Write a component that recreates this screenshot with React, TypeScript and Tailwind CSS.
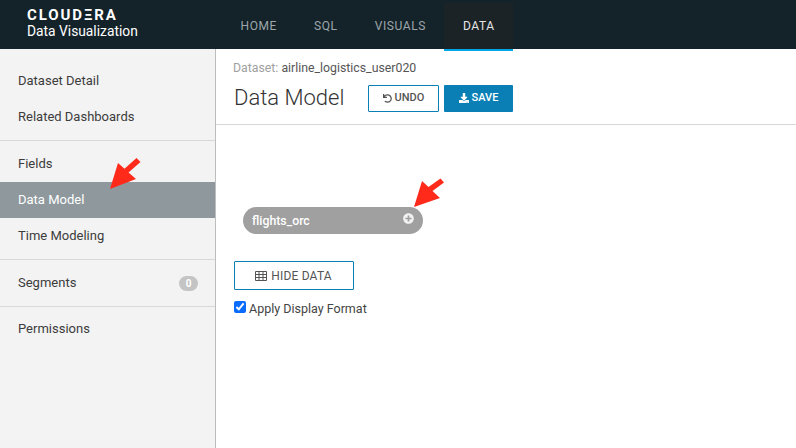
import React from "react";
import { FaDownload, FaPlusCircle, FaUndo } from "react-icons/fa";

const navItems = ["HOME", "SQL", "VISUALS", "DATA"];

const RedArrow: React.FC<{ className: string; d: string }> = ({ className, d }) => (
  <svg className={className} viewBox="0 0 32 36" width="32" height="36">
    <path d={d} fill="#ff2a1a" />
  </svg>
);

const SideItem: React.FC<{ label: string; active?: boolean; badge?: string }> = ({
  label,
  active,
  badge,
}) => (
  <div
    className={`h-9 pl-[18px] pr-[17px] flex items-center justify-between text-[13px] ${
      active ? "bg-[#8e989d] text-white" : "text-[#3c3c3c]"
    }`}
  >
    <span>{label}</span>
    {badge && (
      <span className="w-[19px] h-[15px] rounded-full bg-[#c4c4c4] text-white text-[10px] font-bold flex items-center justify-center">
        {badge}
      </span>
    )}
  </div>
);

export default function App() {
  return (
    <div className="relative w-[796px] h-[448px] overflow-hidden bg-white font-['Roboto',sans-serif]">
      <header className="h-[49px] bg-[#14232a] flex">
        <div className="w-[222px] pl-[27px] pt-[8px] text-white shrink-0">
          <div className="text-[15px] leading-[14px] font-bold tracking-[1.9px]">CLOUDΞRA</div>
          <div className="text-[13.8px] leading-[18px]">Data Visualization</div>
        </div>
        <nav className="flex h-[49px]">
          {navItems.map((item) => (
            <div
              key={item}
              className={`px-[18.5px] flex items-center text-[12px] tracking-[0.6px] ${
                item === "DATA"
                  ? "bg-[#1c2326] text-[#e4e6e7] mt-[3px] h-[48px] border-b-2 border-[#00a6e6]"
                  : "pt-[3px] text-[#9ea6aa]"
              }`}
            >
              {item}
            </div>
          ))}
        </nav>
      </header>

      <div className="flex h-[399px]">
        <aside className="w-[216px] shrink-0 bg-[#f3f3f3] border-r border-[#bdbdbd]">
          <div className="pt-[14px] pb-[5px] border-b border-[#d8d8d8]">
            <SideItem label="Dataset Detail" />
            <SideItem label="Related Dashboards" />
          </div>
          <div className="pt-[5px] pb-[5px] border-b border-[#d8d8d8]">
            <SideItem label="Fields" />
            <SideItem label="Data Model" active />
            <SideItem label="Time Modeling" />
          </div>
          <div className="pt-[5px] pb-[5px] border-b border-[#d8d8d8]">
            <SideItem label="Segments" badge="0" />
          </div>
          <div className="pt-[4px]">
            <SideItem label="Permissions" />
          </div>
        </aside>

        <main className="flex-1">
          <div className="h-[76px] pl-[17px] pt-[12px] border-b border-[#d8d8d8]">
            <div className="text-[12.3px] leading-[14px] text-[#a0a0a0]">
              Dataset: <span className="text-[#555]">airline_logistics_user020</span>
            </div>
            <div className="flex items-center mt-[5px] pl-[1px]">
              <h1 className="text-[22px] leading-[36px] font-light text-[#333] w-[134px]">Data Model</h1>
              <button className="w-[71px] h-[27px] border border-[#0a7fb5] rounded-[1px] flex items-center justify-center gap-[3px] text-[11px] font-medium text-[#555]">
                <FaUndo className="text-[9px]" />
                UNDO
              </button>
              <button className="ml-[5px] w-[69px] h-[27px] bg-[#0a7fb5] rounded-[1px] flex items-center justify-center gap-[3px] text-[11px] font-medium text-white">
                <FaDownload className="text-[10px]" />
                SAVE
              </button>
            </div>
          </div>

          <div className="pl-[18px] pt-[82px]">
            <div className="ml-[9px] w-[180px] h-[27px] rounded-full bg-[#a0a0a0] flex justify-between pl-[9px] pr-[9px] text-white">
              <span className="text-[12.3px] font-medium leading-[28px]">flights_orc</span>
              <FaPlusCircle className="mt-[6px] text-[11px] text-[#f2f2f2]" />
            </div>
            <button className="mt-[27px] w-[120px] h-[29px] border border-[#0a7fb5] rounded-[1px] flex items-center justify-center gap-[4px] text-[12px] text-[#555] tracking-[0.2px]">
              <svg className="-ml-[1px]" viewBox="0 0 12 10" width="12" height="10" fill="none" stroke="#555" strokeWidth="1">
                <path d="M.5 .5 H11.500 V9.500 H.5 Z M.5 3.500 H11.500 M.5 6.500 H11.500 M4 .5 V9.500 M8 .5 V9.500" />
              </svg>
              HIDE DATA
            </button>
            <label className="mt-[10px] flex items-center gap-[3px] text-[12.5px] text-[#444]">
              <input type="checkbox" defaultChecked className="w-[12px] h-[12px] m-0 mb-[4px] accent-[#0a6cff]" />
              Apply Display Format
            </label>
          </div>
        </main>
      </div>

      <RedArrow
        className="absolute left-[109px] top-[155px]"
        d="M1 34 L9 8 L15.500 13.800 L27.500 3 L31.500 7 L19.500 17.500 L27 24 Z"
      />
      <RedArrow
        className="absolute left-[413px] top-[173px]"
        d="M1 34 L9 8 L15.500 14 L27.500 5.500 L31 9.500 L19.500 18 L27 25 Z"
      />
    </div>
  );
}
